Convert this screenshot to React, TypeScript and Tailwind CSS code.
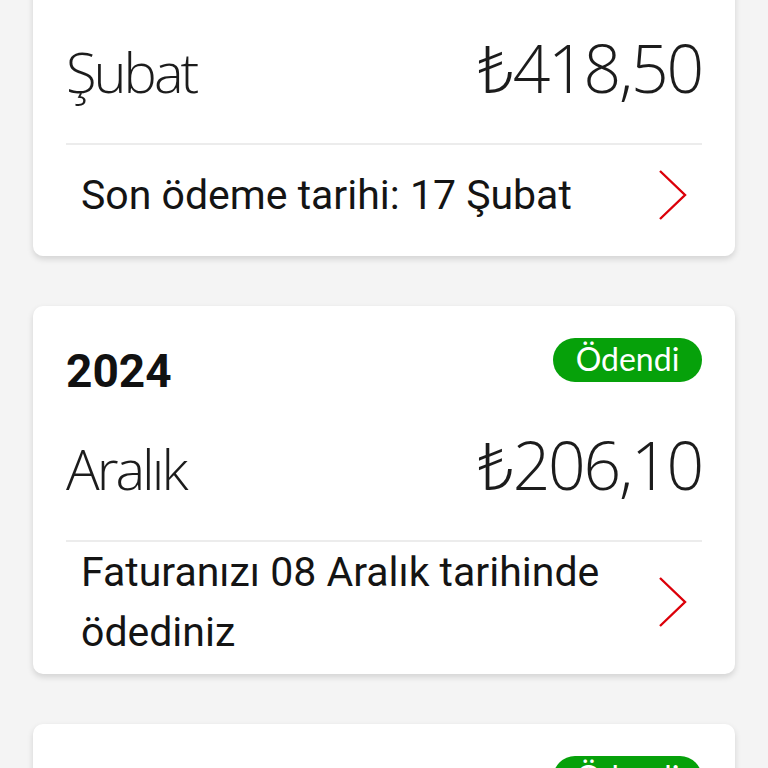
function Chevron() {
  return (
    <svg width="30" height="52" viewBox="0 0 30 52" className="shrink-0" aria-hidden="true">
      <path d="M2 2 L27 26 L2 50" fill="none" stroke="#dc0009" strokeWidth="2.4" />
    </svg>
  );
}

type Bill = {
  year: string;
  month: string;
  amount: string;
  paid: boolean;
  lines: string[];
};

function BillCard({ bill }: { bill: Bill }) {
  return (
    <div className="bg-white rounded-[10px] shadow-[0_3px_6px_rgba(0,0,0,0.14)] px-[33px] pt-[32px] pb-[12px]">
      <div className="flex justify-between items-start">
        <div className="font-['Roboto',sans-serif] font-bold text-[46px] leading-[66px] text-[#111]">{bill.year}</div>
        {bill.paid && (
          <div className="h-[44px] w-[149px] rounded-full bg-[#06a10a] flex items-center justify-center text-white font-['Lato',sans-serif] font-normal text-[32px] leading-none pb-[2px]">
            Ödendi
          </div>
        )}
      </div>
      <div className="mt-[22px] flex justify-between items-baseline text-[#1c1c1c] font-['Open_Sans','Noto_Sans',sans-serif] font-light leading-[76px]">
        <div className="text-[56px] tracking-[-3px]">{bill.month}</div>
        <div className="text-[66px] tracking-[-2.2px]">
          ₺{bill.amount}
        </div>
      </div>
      <div className="mt-[34px] h-[2px] bg-[#ececec]" />
      <div className="flex items-center justify-between min-h-[99px] pl-[15px] pr-[14px]">
        <div className="font-['Roboto',sans-serif] text-[41px] leading-[60px] text-[#141414] pr-[40px]">
          {bill.lines.map((l) => (
            <div key={l}>{l}</div>
          ))}
        </div>
        <Chevron />
      </div>
    </div>
  );
}

export default function App() {
  const bills: Bill[] = [
    { year: "2025", month: "Şubat", amount: "418,50", paid: false, lines: ["Son ödeme tarihi: 17 Şubat"] },
    { year: "2024", month: "Aralık", amount: "206,10", paid: true, lines: ["Faturanızı 08 Aralık tarihinde", "ödediniz"] },
    { year: "2024", month: "Kasım", amount: "198,40", paid: true, lines: ["Faturanızı 08 Kasım tarihinde", "ödediniz"] },
  ];
  return (
    <div className="h-[768px] overflow-hidden bg-[#f4f4f4]">
      <div className="px-[33px] -mt-[91px] flex flex-col gap-[50px]">
        {bills.map((b, i) => (
          <BillCard key={i} bill={b} />
        ))}
      </div>
    </div>
  );
}
